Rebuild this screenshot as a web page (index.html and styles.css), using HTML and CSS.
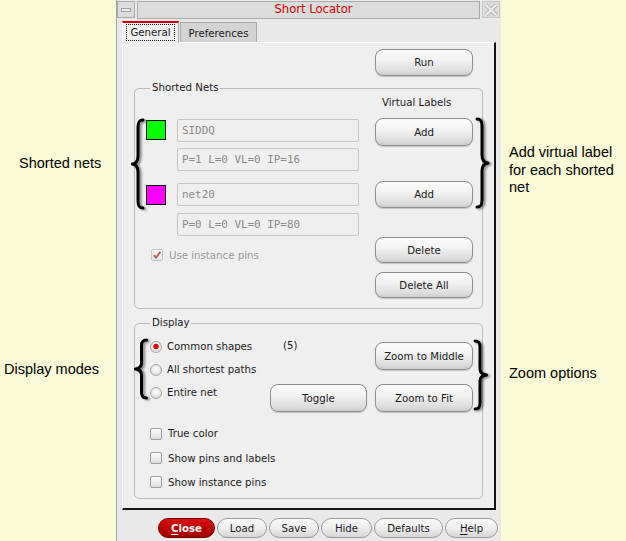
FILE: index.html
```html
<!DOCTYPE html>
<html>
<head>
<meta charset="utf-8">
<link rel="stylesheet" href="styles.css">
</head>
<body>
<div class="page">
  <div class="ann ann-left">
    <p class="note note-nets">Shorted nets</p>
    <p class="note note-modes">Display modes</p>
  </div>

  <div class="window">
    <div class="titlebar">
      <div class="tb-btn tb-min"><span class="min-glyph"></span></div>
      <div class="tb-title">Short Locator</div>
      <div class="tb-btn tb-close">
        <svg width="16" height="16" viewBox="0 0 16 16"><path d="M3 3 L13 13 M13 3 L3 13" stroke="#b4b4b4" stroke-width="4" fill="none"/><path d="M3 3 L13 13 M13 3 L3 13" stroke="#efefef" stroke-width="2" fill="none"/></svg>
      </div>
    </div>

    <div class="tabs">
      <div class="tab tab-active"><span class="focus">General</span></div>
      <div class="tab tab-pref">Preferences</div>
    </div>

    <div class="panel">
      <div class="run-row"><button class="btn">Run</button></div>

      <fieldset class="group group-nets">
        <legend>Shorted Nets</legend>
        <div class="nets-grid">
          <span class="vl-label">Virtual Labels</span>
          <span class="swatch sw-green"></span>
          <div class="field f1">SIDDQ</div>
          <button class="btn add1">Add</button>
          <div class="field f2">P=1 L=0 VL=0 IP=16</div>
          <span class="swatch sw-magenta"></span>
          <div class="field f3">net20</div>
          <button class="btn add2">Add</button>
          <div class="field f4">P=0 L=0 VL=0 IP=80</div>
          <label class="check disabled use-pins"><span class="cb">
            <svg width="10" height="10" viewBox="0 0 10 10"><path d="M1.8 5.2 L4 7.6 L8.4 1.8" stroke="#b25a5a" stroke-width="1.8" fill="none"/></svg>
          </span>Use instance pins</label>
          <button class="btn del">Delete</button>
          <button class="btn delall">Delete All</button>
        </div>
      </fieldset>

      <fieldset class="group group-display">
        <legend>Display</legend>
        <div class="disp-top">
          <div class="radios">
            <label class="radio-row"><span class="radio on"></span>Common shapes</label>
            <label class="radio-row"><span class="radio"></span>All shortest paths</label>
            <label class="radio-row"><span class="radio"></span>Entire net</label>
          </div>
          <div class="disp-buttons">
            <span class="count">(5)</span>
            <button class="btn zmid">Zoom to Middle</button>
            <button class="btn toggle">Toggle</button>
            <button class="btn zfit">Zoom to Fit</button>
          </div>
        </div>
        <div class="checks">
          <label class="check row-a"><span class="cb"></span>True color</label>
          <label class="check row-b"><span class="cb"></span>Show pins and labels</label>
          <label class="check row-c"><span class="cb"></span>Show instance pins</label>
        </div>
      </fieldset>
    </div>

    <div class="footer">
      <button class="pill pill-close"><u>C</u>lose</button>
      <button class="pill w-load">Load</button>
      <button class="pill w-save">Save</button>
      <button class="pill w-hide">Hide</button>
      <button class="pill w-def">Defaults</button>
      <button class="pill w-help"><u>H</u>elp</button>
    </div>
  </div>

  <div class="ann ann-right">
    <p class="note note-add">Add virtual label<br>for each shorted<br>net</p>
    <p class="note note-zoom">Zoom options</p>
  </div>

  <svg class="brace brace-a" width="14" height="92" viewBox="0 0 14 92"><path d="M12 2 C8 2 7 4 7 9 L7 38 C7 43 5 45.5 1.5 46 C5 46.5 7 49 7 54 L7 83 C7 88 8 90 12 90" /></svg>
  <svg class="brace brace-b" width="16" height="92" viewBox="0 0 16 92"><path d="M2 2 C6 2 7 4 7 9 L7 38 C7 43 9 45.5 13 46 C9 46.5 7 49 7 54 L7 83 C7 88 6 90 2 90" /></svg>
  <svg class="brace brace-c" width="14" height="62" viewBox="0 0 14 62"><path d="M12.5 2 C8.5 2 7.5 4 7.5 8 L7.5 25 C7.5 29 5.5 30.5 1.5 31 C5.5 31.5 7.5 33 7.5 37 L7.5 54 C7.5 58 8.5 60 12.5 60" /></svg>
  <svg class="brace brace-d" width="16" height="72" viewBox="0 0 16 72"><path d="M2 2 C6 2 7 4 7 8 L7 30 C7 34 9 35.5 13.5 36 C9 36.5 7 38 7 42 L7 64 C7 68 6 70 2 70" /></svg>
</div>
</body>
</html>
```

FILE: styles.css
```css
* { box-sizing: border-box; }

html, body {
  margin: 0;
  padding: 0;
}

body {
  width: 626px;
  height: 541px;
  overflow: hidden;
  background: #fafad7;
  font-family: "DejaVu Sans", sans-serif;
  font-size: 10.2px;
  color: #1a1a1a;
}

.page {
  position: relative;
  display: flex;
  height: 541px;
}

/* annotations */
.ann { flex: none; }
.ann-left { width: 116px; }
.ann-right { flex: 1; padding-left: 8px; }

.note {
  margin: 0;
  font-family: "Liberation Sans", Arial, sans-serif;
  font-size: 14.5px;
  line-height: 17.5px;
  color: #000;
}
.note-nets { margin-top: 155px; padding-left: 19px; }
.note-modes { margin-top: 188px; padding-left: 4px; }
.note-add { margin-top: 144px; }
.note-zoom { margin-top: 168px; }

/* window */
.window {
  flex: none;
  width: 385px;
  height: 541px;
  background: #e9e9e9;
  border-left: 1px solid #a2a2a2;
  display: flex;
  flex-direction: column;
}

.titlebar {
  display: flex;
  height: 18px;
  margin-top: 1px;
  gap: 2px;
}
.tb-btn {
  width: 18px;
  height: 17px;
  display: flex;
  align-items: center;
  justify-content: center;
}
.tb-min {
  background: #dcdcdc;
  border: 1px solid #ababab;
  align-items: flex-end;
  padding-bottom: 5px;
}
.min-glyph {
  width: 10px;
  height: 4px;
  border: 1px solid #a0a0a0;
  background: #eeeeee;
}
.tb-title {
  flex: 1;
  background: #dcdcdc;
  border: 1px solid #ababab;
  color: #d40000;
  font-size: 11.6px;
  line-height: 15px;
  text-align: center;
  padding-left: 10px;
}
.tb-close {
  background: #dcdcdc;
  border: 1px solid #c8c8c8;
  margin-right: 1px;
}

/* tabs */
.tabs {
  display: flex;
  margin-left: 5px;
  margin-top: 2px;
  height: 21px;
  gap: 1px;
}
.tab {
  color: #1a1a1a;
  font-size: 10.2px;
}
.tab-active {
  position: relative;
  z-index: 1;
  width: 57px;
  height: 22px;
  background: #efefef;
  border-top: 2px solid #d10000;
  border-left: 1px solid #ffffff;
  border-right: 1px solid #a8a8a8;
  padding: 1px 3px 0 3px;
}
.focus {
  display: flex;
  align-items: center;
  justify-content: center;
  height: 17px;
  border: 1px dotted #111;
}
.tab-pref {
  width: 77px;
  margin-top: 1px;
  height: 20px;
  background: #d3d3d3;
  border: 1px solid #a9a9a9;
  border-bottom: none;
  display: flex;
  align-items: center;
  justify-content: center;
  padding-top: 1px;
}

/* panel */
.panel {
  margin-left: 5px;
  width: 374px;
  height: 468px;
  background: #efefef;
  border-top: 1px solid #ffffff;
  border-left: 1px solid #ffffff;
  border-right: 2px solid #151515;
  border-bottom: 2px solid #151515;
}

.run-row {
  padding-left: 252px;
  padding-top: 6px;
}

.btn {
  display: block;
  width: 98px;
  height: 27px;
  padding: 0;
  font-family: "DejaVu Sans", sans-serif;
  font-size: 10.2px;
  color: #1a1a1a;
  background: linear-gradient(#fbfbfb, #f3f3f3 40%, #dcdcdc 85%, #cfcfcf);
  border: 1px solid #8e8e8e;
  border-radius: 8px;
  box-shadow: 0 1px 1px rgba(0, 0, 0, 0.18);
}

/* group boxes */
.group {
  margin: 0 0 0 11px;
  width: 349px;
  min-inline-size: 0;
  border: 1px solid #bdbdbd;
  border-radius: 5px;
  padding: 0;
}
.group legend {
  margin-left: 15px;
  padding: 0 1px 0 2px;
  font-size: 10.2px;
  line-height: 14px;
  color: #1a1a1a;
}
.group-nets { margin-top: 5px; padding-top: 1px; padding-bottom: 10px; }
.group-display { margin-top: 7px; padding-bottom: 4px; }

.nets-grid {
  display: grid;
  margin-left: 11px;
  grid-template-columns: 31px 198px 98px;
  grid-template-rows: 22px 28px 33px 31px 27px 27px 34px;
  align-items: start;
}
.vl-label {
  grid-column: 3;
  grid-row: 1;
  padding-left: 7px;
  line-height: 14px;
}
.swatch {
  width: 20px;
  height: 20px;
  border: 1px solid #000;
  grid-column: 1;
}
.sw-green { background: #00ff00; grid-row: 2; margin-top: 2px; }
.sw-magenta { background: #ff00ff; grid-row: 4; margin-top: 6px; }

.field {
  grid-column: 2;
  width: 182px;
  height: 23px;
  border: 1px solid #c6c6c6;
  border-radius: 2px;
  background: #efefef;
  font-family: "DejaVu Sans Mono", monospace;
  font-size: 10.9px;
  color: #8a8a8a;
  line-height: 21px;
  padding-left: 4px;
}
.f1 { grid-row: 2; margin-top: 1px; }
.f2 { grid-row: 3; margin-top: 2px; }
.f3 { grid-row: 4; margin-top: 4px; }
.f4 { grid-row: 5; margin-top: 3px; }

.add1 { grid-column: 3; grid-row: 2; height: 28px; }
.add2 { grid-column: 3; grid-row: 4; margin-top: 2px; }
.del { grid-column: 3; grid-row: 6; height: 26px; }
.delall { grid-column: 3; grid-row: 7; height: 26px; margin-top: 8px; }

.check {
  display: flex;
  align-items: center;
  gap: 6px;
  color: #1a1a1a;
  font-size: 10.2px;
}
.check.disabled { color: #9a9a9a; }
.use-pins {
  grid-column: 1 / 3;
  grid-row: 6;
  margin-top: 12px;
  margin-left: 5px;
  height: 12px;
}
.cb {
  flex: none;
  width: 12px;
  height: 12px;
  border: 1px solid #9c9c9c;
  border-radius: 2px;
  background: linear-gradient(#fdfdfd, #dedede);
  display: flex;
  align-items: center;
  justify-content: center;
}
.check.disabled .cb {
  border-color: #c4c4c4;
  background: linear-gradient(#f8f8f8, #e6e6e6);
}

/* display group */
.disp-top {
  display: flex;
  align-items: flex-start;
  padding-left: 14px;
}
.radios {
  width: 121px;
  margin-top: 5px;
  padding-left: 1px;
  display: flex;
  flex-direction: column;
}
.radio-row {
  height: 23px;
  display: flex;
  align-items: center;
  gap: 5px;
  white-space: nowrap;
}
.radio {
  flex: none;
  width: 12px;
  height: 12px;
  border-radius: 50%;
  border: 1px solid #a6a6a6;
  background: radial-gradient(circle at 50% 40%, #ffffff, #e6e6e6 55%, #cfcfcf);
}
.radio.on {
  background: radial-gradient(circle at 50% 45%, #ff1a1a 0, #d00000 2.3px, #f4f4f4 3.2px, #dcdcdc 6px);
}
.disp-buttons {
  margin-top: 12px;
  display: grid;
  grid-template-columns: 97px 98px;
  grid-template-rows: 28px 28px;
  column-gap: 8px;
  row-gap: 14px;
}
.count {
  grid-column: 1;
  grid-row: 1;
  align-self: start;
  margin-top: -3px;
  padding-left: 13px;
  line-height: 14px;
}
.zmid { grid-column: 2; grid-row: 1; height: 28px; width: 98px; }
.toggle { grid-column: 1; grid-row: 2; height: 28px; width: 97px; }
.zfit { grid-column: 2; grid-row: 2; height: 28px; }

.checks {
  margin-top: 9px;
  padding-left: 15px;
  display: flex;
  flex-direction: column;
}
.row-a { height: 25px; }
.row-b { height: 24px; }
.row-c { height: 24px; }

/* footer */
.footer {
  display: flex;
  gap: 2px;
  margin-top: 8px;
  margin-left: 41px;
}
.pill {
  height: 20px;
  padding: 0;
  font-family: "DejaVu Sans", sans-serif;
  font-size: 10.2px;
  color: #1a1a1a;
  background: linear-gradient(#fbfbfb, #eeeeee 50%, #d6d6d6);
  border: 1px solid #9a9a9a;
  border-radius: 10px;
}
.pill u { text-decoration-thickness: 1px; text-underline-offset: 2px; }
.pill-close {
  width: 57px;
  color: #ffffff;
  font-weight: bold;
  background: linear-gradient(#d91515, #c00000 50%, #a00000);
  border-color: #7a0000;
}
.w-load { width: 50px; }
.w-save { width: 50px; }
.w-hide { width: 51px; }
.w-def { width: 69px; }
.w-help { width: 53px; }

/* braces (overlay annotations) */
.brace {
  position: absolute;
  overflow: visible;
  filter: drop-shadow(2px 1px 1.2px rgba(0, 0, 0, 0.45));
}
.brace path {
  fill: none;
  stroke: #000;
  stroke-width: 3;
  stroke-linecap: round;
  stroke-linejoin: round;
}
.brace-a { left: 131px; top: 118px; }
.brace-b { left: 475px; top: 117px; }
.brace-c { left: 134px; top: 338px; }
.brace-d { left: 473px; top: 339px; }
```
